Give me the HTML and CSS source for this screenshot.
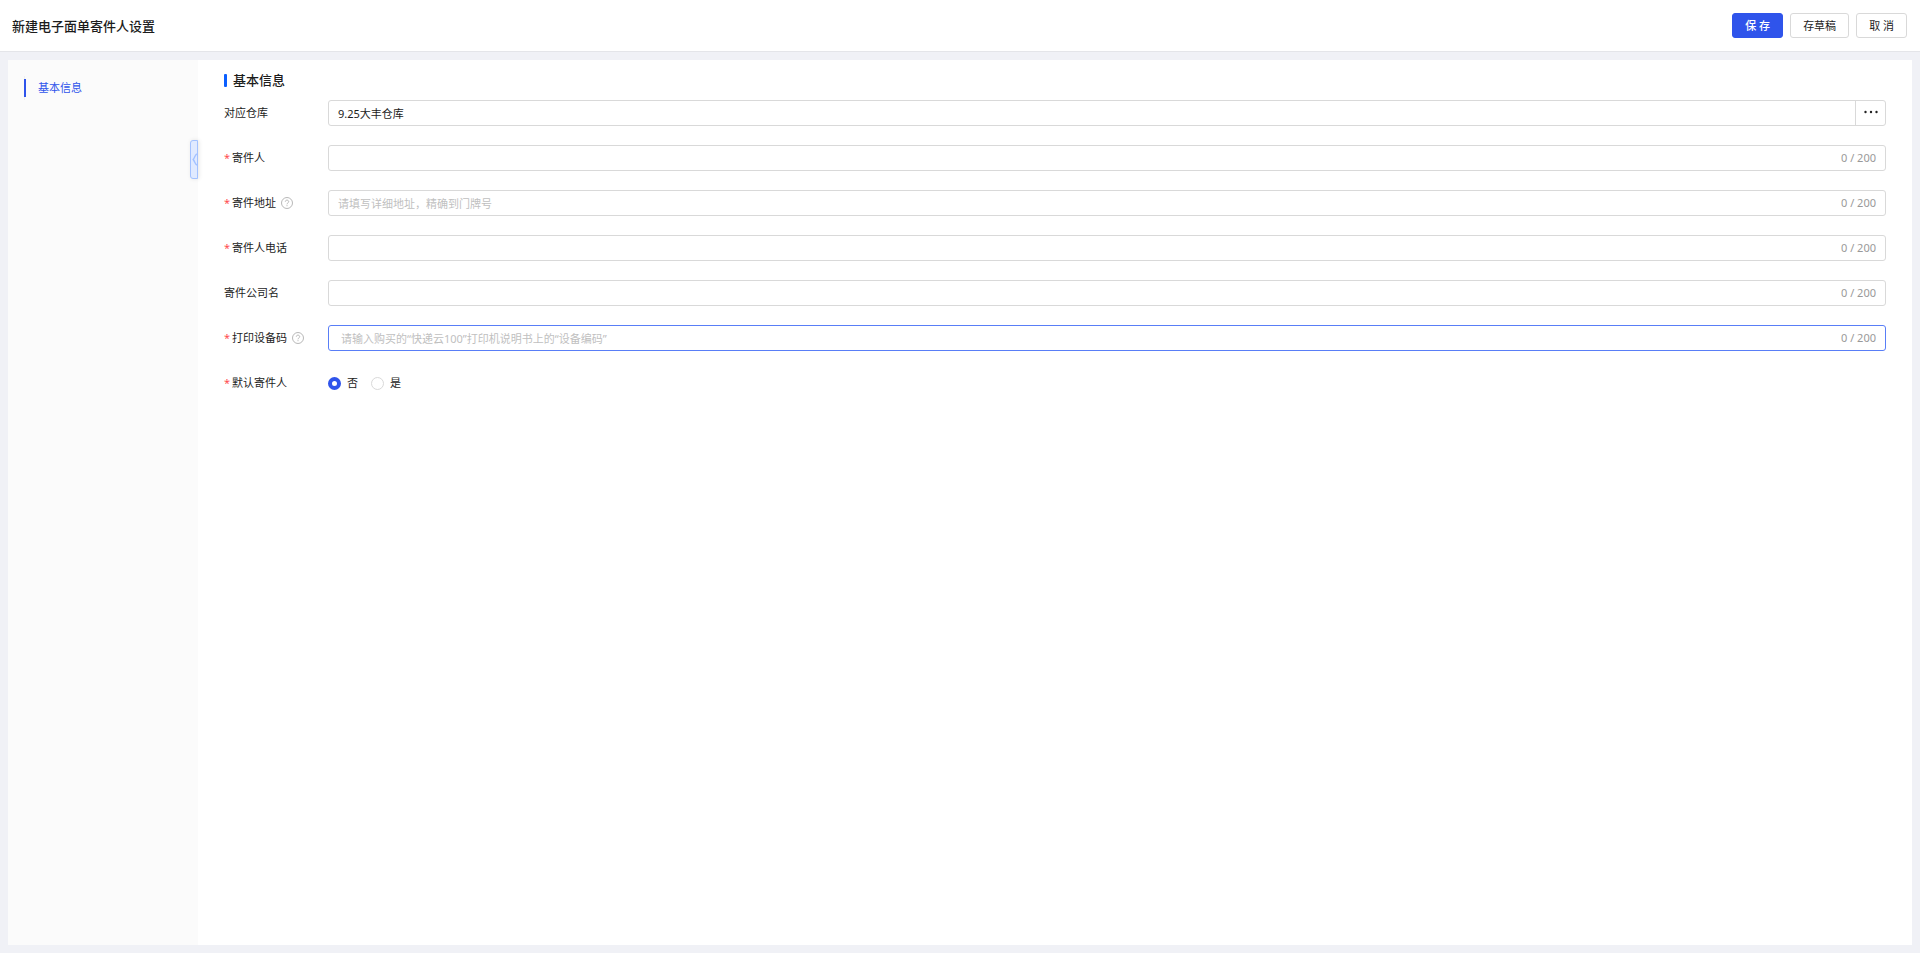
FILE: index.html
```
<!DOCTYPE html>
<html lang="zh-CN">
<head>
    <meta charset="UTF-8">
    <meta name="viewport" content="width=device-width, initial-scale=1.0">
    <title>新建电子面单寄件人设置</title>
    <link rel="stylesheet" href="styles.css">
</head>
<body>
    <header class="header">
        <h1>新建电子面单寄件人设置</h1>
        <div class="header-btns">
            <button type="submit" form="sender-form" class="btn btn-primary">保 存</button>
            <button type="button" class="btn">存草稿</button>
            <button type="button" class="btn">取 消</button>
        </div>
    </header>
    <div class="main">
        <aside class="sidebar">
            <nav class="anchor">
                <a href="#base" class="anchor-link">基本信息</a>
            </nav>
            <button type="button" class="collapse-btn" aria-label="收起">
                <svg width="5" height="14" viewBox="0 0 5 14"><path d="M5 1C3 1.5 3.2 4 1.2 6.5C3.2 9 3 11.5 5 12" /></svg>
            </button>
        </aside>
        <form class="content" id="sender-form">
            <h2 id="base">基本信息</h2>
            <div class="form-row">
                <label class="label" for="warehouse">对应仓库</label>
                <div class="field">
                    <input type="text" id="warehouse" value="9.25大丰仓库">
                    <button type="button" class="more-btn" aria-label="选择仓库">
                        <svg width="16" height="6" viewBox="0 0 16 6"><circle cx="2.5" cy="2" r="1.2" /><circle cx="8" cy="2" r="1.2" /><circle cx="13.5" cy="2" r="1.2" /></svg>
                    </button>
                </div>
            </div>
            <div class="form-row">
                <label class="label required" for="sender">寄件人</label>
                <div class="field">
                    <input type="text" id="sender" maxlength="200">
                    <span class="count">0 / 200</span>
                </div>
            </div>
            <div class="form-row">
                <label class="label required" for="address">寄件地址
                    <svg class="help" viewBox="0 0 12 12"><circle cx="6" cy="6" r="5.5" /><path d="M4.3 4.7C4.3 2.6 7.7 2.6 7.7 4.7C7.7 5.9 6 5.9 6 7.3M6 8.2V9.2" /></svg>
                </label>
                <div class="field">
                    <input type="text" id="address" maxlength="200" placeholder="请填写详细地址，精确到门牌号">
                    <span class="count">0 / 200</span>
                </div>
            </div>
            <div class="form-row">
                <label class="label required" for="phone">寄件人电话</label>
                <div class="field">
                    <input type="text" id="phone" maxlength="200">
                    <span class="count">0 / 200</span>
                </div>
            </div>
            <div class="form-row">
                <label class="label" for="company">寄件公司名</label>
                <div class="field">
                    <input type="text" id="company" maxlength="200">
                    <span class="count">0 / 200</span>
                </div>
            </div>
            <div class="form-row">
                <label class="label required" for="device">打印设备码
                    <svg class="help" viewBox="0 0 12 12"><circle cx="6" cy="6" r="5.5" /><path d="M4.3 4.7C4.3 2.6 7.7 2.6 7.7 4.7C7.7 5.9 6 5.9 6 7.3M6 8.2V9.2" /></svg>
                </label>
                <div class="field active">
                    <input type="text" id="device" maxlength="200" placeholder="请输入购买的“快递云100”打印机说明书上的“设备编码”">
                    <span class="count">0 / 200</span>
                </div>
            </div>
            <div class="form-row" role="radiogroup" aria-labelledby="default-label">
                <span class="label required" id="default-label">默认寄件人</span>
                <div class="radios">
                    <label><input type="radio" name="default" value="0" checked>否</label>
                    <label><input type="radio" name="default" value="1">是</label>
                </div>
            </div>
        </form>
    </div>
</body>
</html>
```
FILE: styles.css
```
*{
    margin: 0;
    padding: 0;
    box-sizing: border-box;
}
body{
    display: flex;
    flex-direction: column;
    min-height: 100vh;
    background-color: #f0f1f6;
    color: #1c1c1c;
    font-family: "Noto Sans", "Noto Sans CJK SC", sans-serif;
    font-size: 11px;
    line-height: 16px;
}
button,
input{
    font: inherit;
    color: inherit;
}
.header{
    display: flex;
    align-items: center;
    justify-content: space-between;
    height: 52px;
    padding: 0 13px 0 12px;
    background-color: #fff;
    border-bottom: 1px solid #e4e5e9;
}
h1,
h2{
    font-size: 13px;
    font-weight: 500;
}
.header-btns{
    display: flex;
    gap: 7px;
}
.btn{
    height: 25px;
    padding: 0 12px;
    background-color: #fff;
    border: 1px solid #d9d9d9;
    border-radius: 3px;
    cursor: pointer;
}
.btn-primary{
    color: #fff;
    font-weight: 500;
    background-color: #2f54eb;
    border-color: #2f54eb;
}
.main{
    flex: 1;
    display: flex;
    margin: 8px;
    background-color: #fff;
}
.sidebar{
    position: relative;
    width: 190px;
    padding: 16px;
    background-color: #fbfbfb;
}
.anchor{
    padding: 3px 0;
    border-left: 1px solid #f0f0f0;
}
.anchor-link{
    display: block;
    margin-left: -1px;
    padding: 1px 12px;
    color: #2f54eb;
    border-left: 2px solid #2f54eb;
    text-decoration: none;
}
.collapse-btn{
    position: absolute;
    top: 80px;
    right: 0;
    display: flex;
    align-items: center;
    justify-content: flex-end;
    width: 8px;
    height: 39px;
    background-color: #e0eaff;
    border: 1px solid #a3c2ff;
    border-radius: 3px 0 0 3px;
    box-shadow: 1px 0 4px rgba(0, 0, 0, 0.1);
    cursor: pointer;
}
.collapse-btn svg{
    flex-shrink: 0;
    fill: none;
    stroke: #a3c2ff;
    stroke-width: 1.4;
}
.content{
    flex: 1;
    padding: 12px 26px;
}
h2{
    display: flex;
    align-items: center;
    gap: 6px;
    margin-bottom: 12px;
}
h2::before{
    content: "";
    width: 3px;
    height: 13px;
    background-color: #0b5fff;
    border-radius: 1px;
}
.form-row{
    display: flex;
    align-items: center;
    height: 26px;
    margin-bottom: 19px;
}
.label{
    display: flex;
    align-items: center;
    width: 104px;
}
.required::before{
    content: "*";
    width: 8px;
    color: #ff4d4f;
}
.help{
    width: 12px;
    height: 12px;
    margin-left: 5px;
    fill: none;
    stroke: #b0b0b0;
    stroke-width: 0.9;
}
.field{
    flex: 1;
    display: flex;
    align-items: center;
    height: 26px;
    border: 1px solid #d9d9d9;
    border-radius: 3px;
}
.field input{
    flex: 1;
    height: 24px;
    padding: 0 9px;
    background: none;
    border: none;
    outline: none;
}
.field input::placeholder{
    color: #bfbfbf;
}
.active{
    border-color: #597ef7;
}
.active input{
    padding: 0 12px;
}
.count{
    padding-right: 9px;
    color: #999;
}
.more-btn{
    display: flex;
    align-items: center;
    justify-content: center;
    width: 30px;
    height: 24px;
    background: none;
    border: none;
    border-left: 1px solid #d9d9d9;
    cursor: pointer;
}
.more-btn svg{
    fill: #222;
}
.radios{
    display: flex;
    gap: 13px;
}
.radios label{
    display: flex;
    align-items: center;
    gap: 6px;
}
.radios input{
    appearance: none;
    width: 13px;
    height: 13px;
    background-color: #fff;
    border: 1px solid #d9d9d9;
    border-radius: 50%;
}
.radios input:checked{
    border: 4px solid #2f54eb;
}
```
